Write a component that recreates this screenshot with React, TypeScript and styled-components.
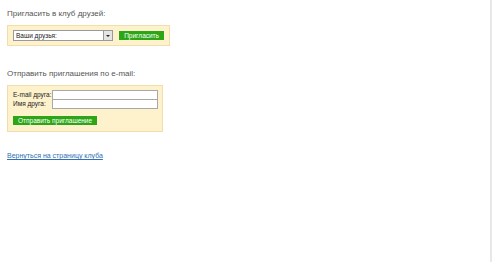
import styled, { createGlobalStyle } from "styled-components";

const Global = createGlobalStyle`
  body {
    margin: 0;
    background: #ffffff;
    font-family: "Liberation Sans", Arial, sans-serif;
  }
`;

const Page = styled.div`
  box-sizing: border-box;
  width: 492px;
  height: 262px;
  border-right: 2px solid #e8e8e8;
  padding: 9px 7px 0;
  display: flex;
  flex-direction: column;
  align-items: flex-start;
`;

const Heading = styled.div<{ $gap?: number }>`
  font-size: 8px;
  line-height: 10px;
  color: #555555;
  margin-top: ${({ $gap }) => $gap ?? 0}px;
  margin-bottom: 6px;
`;

const Panel = styled.div<{ $width: number }>`
  box-sizing: border-box;
  width: ${({ $width }) => $width}px;
  background: #fdf2cc;
  border: 1px solid #f1deaa;
  padding: 4px 5px;
  display: flex;
  flex-direction: column;
`;

const Row = styled.div`
  display: flex;
  align-items: center;
  gap: 6px;
`;

const Select = styled.div`
  box-sizing: border-box;
  width: 104px;
  height: 11px;
  border: 1px solid #9a9a9a;
  background: #fff;
  display: flex;
  align-items: center;
  justify-content: space-between;
  font-size: 6.5px;
  color: #222;
  padding-left: 2px;
`;

const Arrow = styled.span`
  box-sizing: border-box;
  width: 9px;
  height: 9px;
  background: #e4e4e4;
  border-left: 1px solid #9a9a9a;
  display: flex;
  align-items: center;
  justify-content: center;
  &::after {
    content: "";
    border-left: 2px solid transparent;
    border-right: 2px solid transparent;
    border-top: 2px solid #222;
  }
`;

const GreenButton = styled.button`
  height: 9px;
  padding: 0 5px;
  border: none;
  background: #2ca616;
  color: #ffffff;
  font-family: "Liberation Sans", Arial, sans-serif;
  font-size: 6.5px;
  line-height: 9px;
  white-space: nowrap;
`;

const FieldGrid = styled.div`
  display: grid;
  grid-template-columns: 39px 106px;
  grid-auto-rows: 9px;
  align-items: center;
  font-size: 6.5px;
  color: #222;
  white-space: nowrap;
`;

const Input = styled.div`
  box-sizing: border-box;
  height: 10px;
  border: 1px solid #a8a8a8;
  background: #fff;
`;

const Actions = styled.div`
  margin-top: 8px;
  margin-bottom: 2px;
  display: flex;
`;

const Link = styled.a`
  font-size: 7px;
  color: #2f6fb4;
  text-decoration: underline;
  margin-top: 20px;
`;

export default function App() {
  return (
    <>
      <Global />
      <Page>
        <Heading>Пригласить в клуб друзей:</Heading>
        <Panel $width={163}>
          <Row>
            <Select>
              Ваши друзья:
              <Arrow />
            </Select>
            <GreenButton>Пригласить</GreenButton>
          </Row>
        </Panel>
        <Heading $gap={23}>Отправить приглашения по e-mail:</Heading>
        <Panel $width={156}>
          <FieldGrid>
            <span>E-mail друга:</span>
            <Input />
            <span>Имя друга:</span>
            <Input />
          </FieldGrid>
          <Actions>
            <GreenButton>Отправить приглашение</GreenButton>
          </Actions>
        </Panel>
        <Link href="#">Вернуться на страницу клуба</Link>
      </Page>
    </>
  );
}
